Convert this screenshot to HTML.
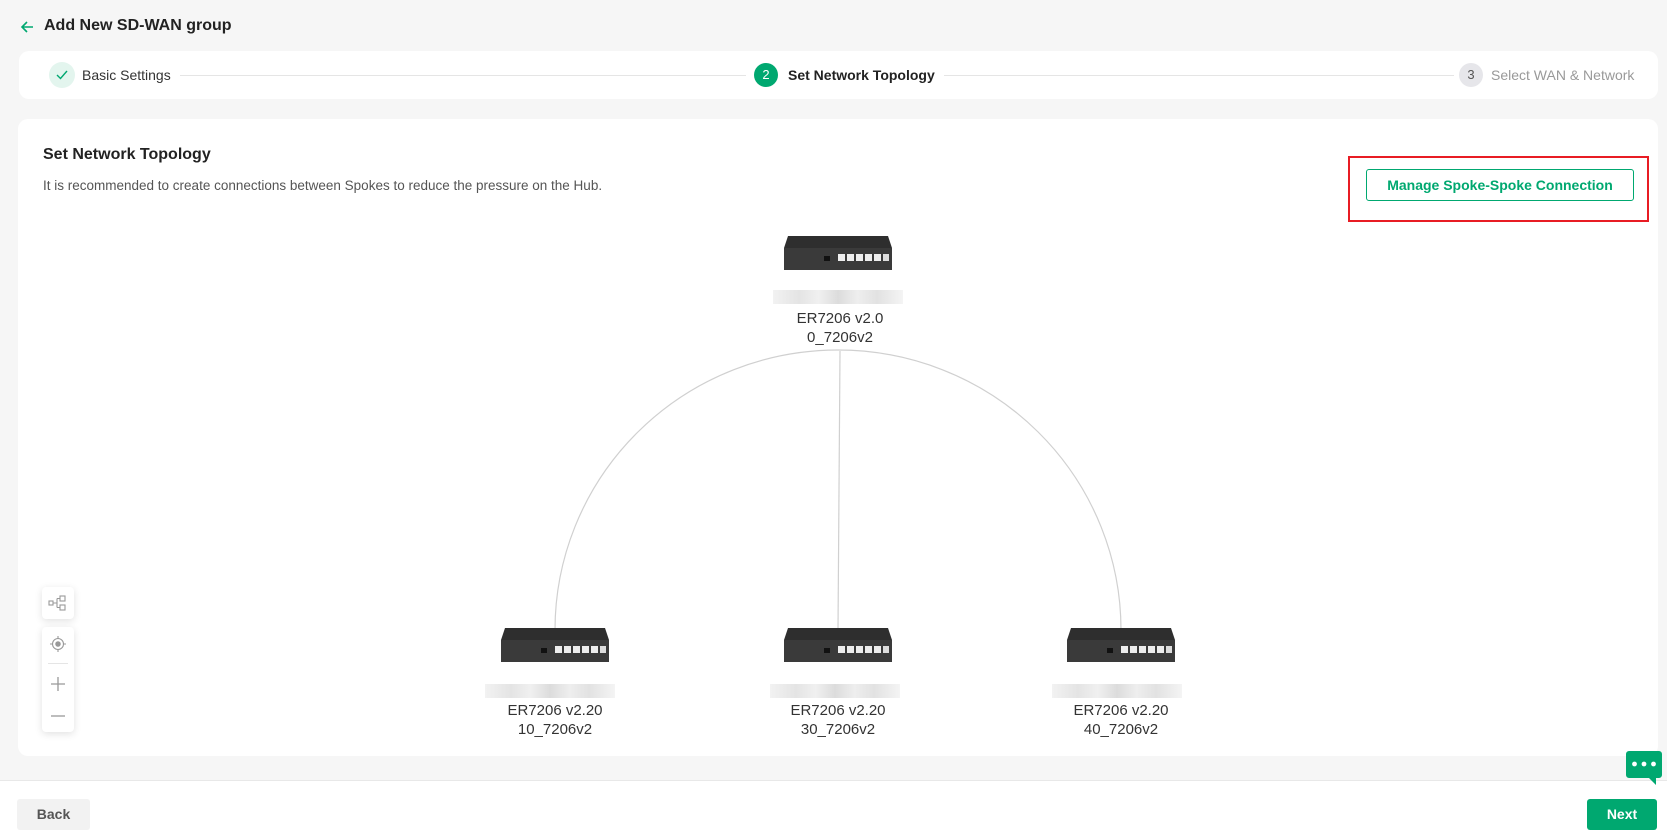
<!DOCTYPE html>
<html><head><meta charset="utf-8"><style>
*{box-sizing:border-box;margin:0;padding:0}
body{width:1667px;height:837px;background:#f6f6f6;font-family:"Liberation Sans",sans-serif;position:relative;overflow:hidden;color:#222}
.abs{position:absolute}
.card{position:absolute;background:#fff;border-radius:10px}
.lbl{position:absolute;width:200px;text-align:center;font-size:15px;color:#333;line-height:18px}
.blur{position:absolute;height:14px;width:130px;background:linear-gradient(90deg,#f2f2f2,#e4e4e4 20%,#f0f0f0 35%,#dcdcdc 50%,#eee 65%,#e2e2e2 80%,#f4f4f4)}
</style></head><body>
<svg class="abs" style="left:19px;top:20px" width="16" height="14" viewBox="0 0 16 14"><path d="M14 7H3M8 2L3 7l5 5" stroke="#00a870" stroke-width="1.6" fill="none"/></svg>
<div class="abs" style="left:44px;top:17px;font-size:16px;font-weight:bold;color:#222">Add New SD-WAN group</div>

<div class="card" style="left:19px;top:51px;width:1639px;height:48px"></div>
<div class="abs" style="left:49px;top:62px;width:26px;height:26px;border-radius:50%;background:#e3f5ee"></div>
<svg class="abs" style="left:55px;top:68px" width="14" height="14" viewBox="0 0 14 14"><path d="M2 7l3.5 3.5L12 3" stroke="#00a870" stroke-width="1.4" fill="none"/></svg>
<div class="abs" style="left:82px;top:67px;font-size:14px;color:#333">Basic Settings</div>
<div class="abs" style="left:180px;top:75px;width:566px;height:1px;background:#e5e5e5"></div>
<div class="abs" style="left:754px;top:63px;width:24px;height:24px;border-radius:50%;background:#00a870;color:#fff;font-size:13px;text-align:center;line-height:24px">2</div>
<div class="abs" style="left:788px;top:67px;font-size:14px;font-weight:bold;color:#222">Set Network Topology</div>
<div class="abs" style="left:944px;top:75px;width:510px;height:1px;background:#e5e5e5"></div>
<div class="abs" style="left:1459px;top:63px;width:24px;height:24px;border-radius:50%;background:#e6e6ea;color:#555;font-size:13px;text-align:center;line-height:24px">3</div>
<div class="abs" style="left:1491px;top:67px;font-size:14px;color:#999">Select WAN &amp; Network</div>

<div class="card" style="left:18px;top:119px;width:1640px;height:637px"></div>
<div class="abs" style="left:43px;top:146px;font-size:16px;font-weight:bold;color:#222">Set Network Topology</div>
<div class="abs" style="left:43px;top:178px;font-size:13.5px;color:#555">It is recommended to create connections between Spokes to reduce the pressure on the Hub.</div>
<div class="abs" style="left:1348px;top:156px;width:301px;height:66px;border:2px solid #e81c24"></div>
<div class="abs" style="left:1366px;top:169px;width:268px;height:32px;border:1px solid #00a870;border-radius:3px;color:#00a870;font-size:14px;font-weight:bold;text-align:center;line-height:30px">Manage Spoke-Spoke Connection</div>

<svg class="abs" style="left:0;top:0" width="1667" height="837">
<path d="M555 630 A283 280 0 0 1 1121 630" stroke="#d0d0d0" stroke-width="1.2" fill="none"/>
<line x1="840" y1="351" x2="838" y2="630" stroke="#d0d0d0" stroke-width="1.2"/>
<defs><g id="dev">
<path d="M4 0H104L108 12H0Z" fill="#2e2e2e"/>
<rect x="0" y="12" width="108" height="22" fill="#3a3a3a"/>
<rect x="40" y="20" width="6" height="5" fill="#111"/>
<rect x="54" y="18" width="7" height="7" fill="#eee"/><rect x="63" y="18" width="7" height="7" fill="#eee"/><rect x="72" y="18" width="7" height="7" fill="#eee"/><rect x="81" y="18" width="7" height="7" fill="#eee"/><rect x="90" y="18" width="7" height="7" fill="#eee"/><rect x="99" y="18" width="6" height="7" fill="#ddd"/>
</g></defs>
<use href="#dev" x="784" y="236"/>
<use href="#dev" x="501" y="628"/>
<use href="#dev" x="784" y="628"/>
<use href="#dev" x="1067" y="628"/>
</svg>
<div class="blur" style="left:773px;top:290px"></div>
<div class="lbl" style="left:740px;top:310px">ER7206 v2.0</div>
<div class="lbl" style="left:740px;top:329px">0_7206v2</div>
<div class="blur" style="left:485px;top:684px"></div>
<div class="lbl" style="left:455px;top:702px">ER7206 v2.20</div>
<div class="lbl" style="left:455px;top:721px">10_7206v2</div>
<div class="blur" style="left:770px;top:684px"></div>
<div class="lbl" style="left:738px;top:702px">ER7206 v2.20</div>
<div class="lbl" style="left:738px;top:721px">30_7206v2</div>
<div class="blur" style="left:1052px;top:684px"></div>
<div class="lbl" style="left:1021px;top:702px">ER7206 v2.20</div>
<div class="lbl" style="left:1021px;top:721px">40_7206v2</div>

<div class="abs" style="left:42px;top:587px;width:32px;height:32px;background:#fff;border-radius:4px;box-shadow:0 2px 8px rgba(0,0,0,.12)"></div>
<svg class="abs" style="left:48px;top:593px" width="20" height="20" viewBox="0 0 20 20" fill="none" stroke="#999" stroke-width="1.1"><rect x="1" y="8" width="4" height="4"/><rect x="12" y="3" width="5" height="5"/><rect x="12" y="12" width="5" height="5"/><path d="M5 10h4M9 5.5v9M9 5.5h3M9 14.5h3"/></svg>
<div class="abs" style="left:42px;top:627px;width:32px;height:105px;background:#fff;border-radius:4px;box-shadow:0 2px 8px rgba(0,0,0,.12)"></div>
<svg class="abs" style="left:48px;top:634px" width="20" height="20" viewBox="0 0 20 20" fill="none" stroke="#999" stroke-width="1.1"><circle cx="10" cy="10" r="5.5"/><circle cx="10" cy="10" r="2.2" fill="#999"/><path d="M10 2v2.5M10 15.5V18M2 10h2.5M15.5 10H18"/></svg>
<div class="abs" style="left:48px;top:663px;width:20px;height:1px;background:#e5e5e5"></div>
<svg class="abs" style="left:48px;top:674px" width="20" height="20" viewBox="0 0 20 20" stroke="#999" stroke-width="1.3"><path d="M10 3v14M3 10h14"/></svg>
<svg class="abs" style="left:48px;top:706px" width="20" height="20" viewBox="0 0 20 20" stroke="#999" stroke-width="1.3"><path d="M3 10h14"/></svg>

<div class="abs" style="left:0;top:780px;width:1667px;height:57px;background:#fff;border-top:1px solid #e8e8e8"></div>
<div class="abs" style="left:17px;top:799px;width:73px;height:31px;background:#f2f2f2;border-radius:3px;color:#555;font-size:14px;font-weight:bold;text-align:center;line-height:31px">Back</div>
<div class="abs" style="left:1587px;top:799px;width:70px;height:31px;background:#00a870;border-radius:3px;color:#fff;font-size:14px;font-weight:bold;text-align:center;line-height:31px">Next</div>
<svg class="abs" style="left:1626px;top:751px" width="36" height="34" viewBox="0 0 36 34"><path d="M3 0H33a3 3 0 0 1 3 3V24a3 3 0 0 1-3 3H30L30 34L23 27H3a3 3 0 0 1-3-3V3a3 3 0 0 1 3-3Z" fill="#00a870"/><circle cx="8.5" cy="13" r="2.4" fill="#fff"/><circle cx="18" cy="13" r="2.4" fill="#fff"/><circle cx="27.5" cy="13" r="2.4" fill="#fff"/></svg>
</body></html>
